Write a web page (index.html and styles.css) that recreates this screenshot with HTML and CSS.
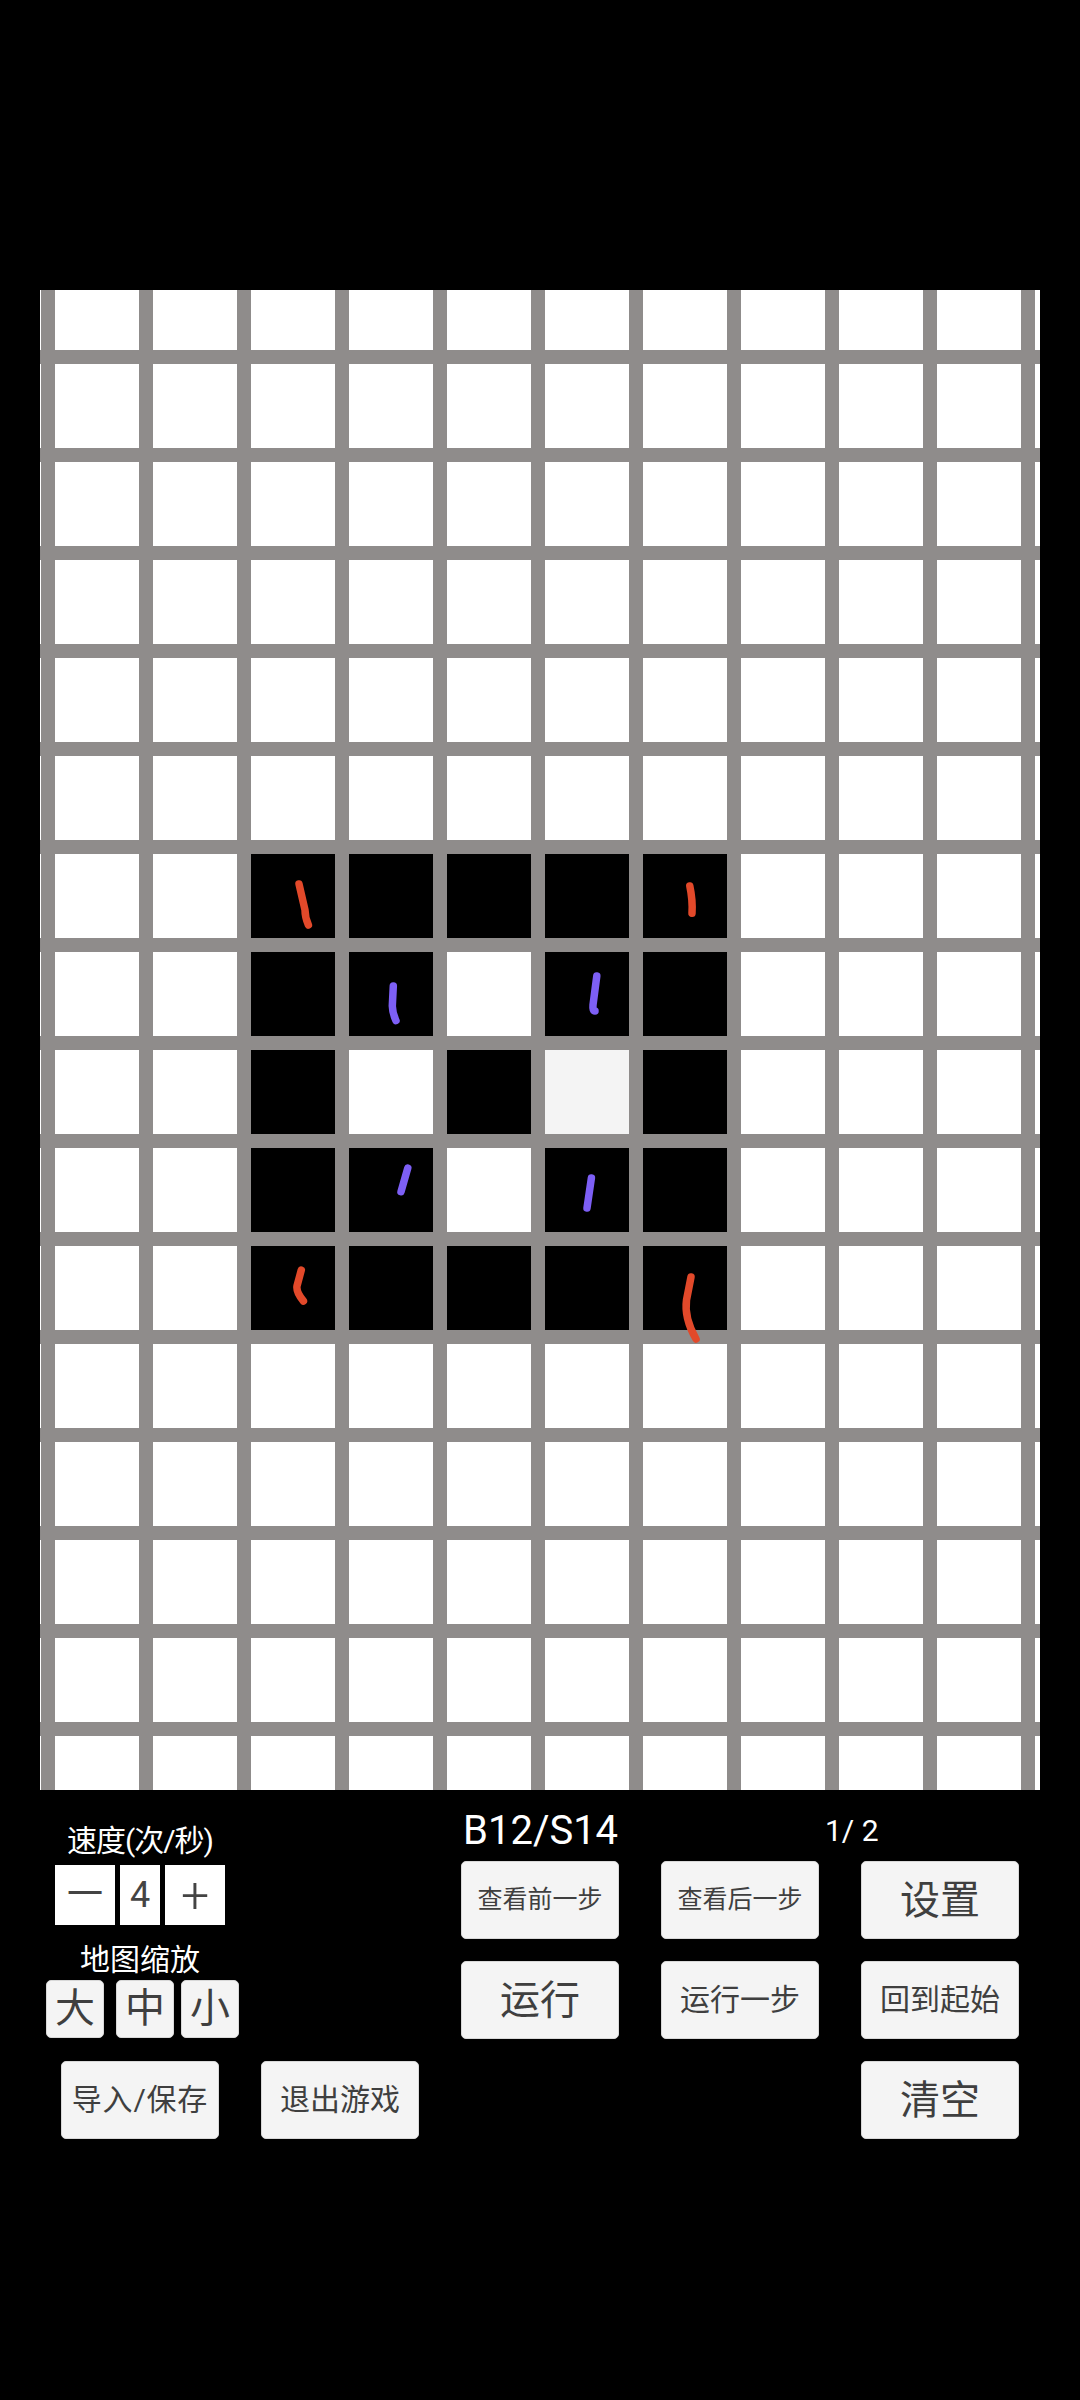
FILE: index.html
```html
<!DOCTYPE html>
<html lang="zh">
<head>
<meta charset="utf-8">
<title>B12/S14</title>
<link rel="stylesheet" href="styles.css">
</head>
<body>
<main class="page">
  <section class="board">
    <div class="cells">
      <div></div><div></div><div></div><div></div><div></div><div></div><div></div><div></div><div></div><div></div><div></div><div></div>
      <div></div><div></div><div></div><div></div><div></div><div></div><div></div><div></div><div></div><div></div><div></div><div></div>
      <div></div><div></div><div></div><div></div><div></div><div></div><div></div><div></div><div></div><div></div><div></div><div></div>
      <div></div><div></div><div></div><div></div><div></div><div></div><div></div><div></div><div></div><div></div><div></div><div></div>
      <div></div><div></div><div></div><div></div><div></div><div></div><div></div><div></div><div></div><div></div><div></div><div></div>
      <div></div><div></div><div></div><div></div><div></div><div></div><div></div><div></div><div></div><div></div><div></div><div></div>
      <div></div><div></div><div></div><div class="on"></div><div class="on"></div><div class="on"></div><div class="on"></div><div class="on"></div><div></div><div></div><div></div><div></div>
      <div></div><div></div><div></div><div class="on"></div><div class="on"></div><div></div><div class="on"></div><div class="on"></div><div></div><div></div><div></div><div></div>
      <div></div><div></div><div></div><div class="on"></div><div></div><div class="on"></div><div class="mark"></div><div class="on"></div><div></div><div></div><div></div><div></div>
      <div></div><div></div><div></div><div class="on"></div><div class="on"></div><div></div><div class="on"></div><div class="on"></div><div></div><div></div><div></div><div></div>
      <div></div><div></div><div></div><div class="on"></div><div class="on"></div><div class="on"></div><div class="on"></div><div class="on"></div><div></div><div></div><div></div><div></div>
      <div></div><div></div><div></div><div></div><div></div><div></div><div></div><div></div><div></div><div></div><div></div><div></div>
      <div></div><div></div><div></div><div></div><div></div><div></div><div></div><div></div><div></div><div></div><div></div><div></div>
      <div></div><div></div><div></div><div></div><div></div><div></div><div></div><div></div><div></div><div></div><div></div><div></div>
      <div></div><div></div><div></div><div></div><div></div><div></div><div></div><div></div><div></div><div></div><div></div><div></div>
      <div></div><div></div><div></div><div></div><div></div><div></div><div></div><div></div><div></div><div></div><div></div><div></div>
    </div>
    <svg class="strokes" viewBox="40 290 1000 1500" aria-hidden="true">
      <g class="red">
        <path d="M299 884 L305 910 Q305 917 308.4 925"/>
        <path d="M689.8 886 Q692.8 900 692 913.3"/>
        <path d="M301.3 1270 L297 1286 Q296 1292 303.4 1301"/>
        <path d="M691 1277 L686.5 1300 Q684 1318 696 1339"/>
      </g>
      <g class="violet">
        <path d="M393.3 986 L392.3 1006 Q392.5 1013 396 1020.7"/>
        <path d="M596.8 976 L593 1005 Q592.5 1011 595 1011"/>
        <path d="M407.8 1168 L401 1191.7"/>
        <path d="M591.4 1178 L587 1208"/>
      </g>
    </svg>
  </section>

  <section class="panel">
    <div class="left">
      <div class="label speed-label">速度(次/秒)</div>
      <div class="stepper">
        <div class="step wide">一</div>
        <div class="step">4</div>
        <div class="step wide plus">+</div>
      </div>
      <div class="label zoom-label">地图缩放</div>
      <div class="zoom">
        <button class="btn zoom-btn">大</button>
        <button class="btn zoom-btn">中</button>
        <button class="btn zoom-btn">小</button>
      </div>
    </div>
    <div class="rule">B12/S14</div>
    <div class="page-count">1/ 2</div>

    <button class="btn m pos-a">查看前一步</button>
    <button class="btn m pos-b">查看后一步</button>
    <button class="btn l pos-c">设置</button>

    <button class="btn l pos-a">运行</button>
    <button class="btn s pos-b">运行一步</button>
    <button class="btn s pos-c">回到起始</button>

    <button class="btn s spaced pos-d">导入/保存</button>
    <button class="btn s pos-e">退出游戏</button>
    <button class="btn l pos-c">清空</button>
  </section>
</main>
</body>
</html>
```

FILE: styles.css
```css
html, body {
  margin: 0;
  background: #000;
}

body {
  font-family: Roboto, "Noto Sans CJK SC", sans-serif;
  color: #fff;
}

.page {
  width: 1080px;
  height: 2400px;
  padding: 290px 40px 0;
  box-sizing: border-box;
}

.board {
  position: relative;
  width: 1000px;
  height: 1500px;
  overflow: hidden;
}

.cells {
  display: grid;
  grid-template-columns: 1px repeat(10, 84px) 5px;
  grid-template-rows: 60px repeat(14, 84px) 54px;
  gap: 14px;
  background: #8f8c8b;
}

.cells > div { background: #fff; }
.cells > .on { background: #000; }
.cells > .mark { background: #f4f4f4; }

.strokes {
  position: absolute;
  inset: 0;
  width: 1000px;
  height: 1500px;
}

.strokes path {
  fill: none;
  stroke-width: 7.5px;
  stroke-linecap: round;
  stroke-linejoin: round;
}

.red path { stroke: #e2492a; }
.violet path { stroke: #7d5ff5; }

.panel {
  display: grid;
  grid-template-columns: repeat(5, 158px);
  grid-template-rows: 49px 78px 78px 78px;
  column-gap: 42px;
  row-gap: 22px;
  margin-left: 21px;
}

.left {
  grid-column: 1;
  grid-row: 1 / span 3;
  display: flex;
  flex-direction: column;
  align-items: center;
}

.label {
  font-size: 30px;
  line-height: 40px;
  white-space: nowrap;
}

.speed-label {
  margin-top: 31px;
  letter-spacing: -1px;
}

.zoom-label { margin-top: 15px; }

.stepper {
  display: flex;
  gap: 5px;
  margin-top: 4px;
}

.step {
  width: 40px;
  height: 60px;
  background: #fff;
  color: #444;
  font-size: 36px;
  line-height: 60px;
  text-align: center;
}

.step.wide { width: 60px; }
.step.plus { font-size: 50px; font-weight: 300; }

.zoom {
  display: flex;
  gap: 7px;
  margin-left: 5px;
}

.btn {
  margin: 0;
  padding: 0 0 6px;
  box-sizing: border-box;
  border: 1px solid #d8d8d8;
  border-radius: 5px;
  background: #f4f4f4;
  color: #3f3f3f;
  font-family: inherit;
  white-space: nowrap;
}

.s { font-size: 30px; }
.m { font-size: 25px; }
.l { font-size: 40px; }
.spaced { letter-spacing: 0.8px; }

.zoom-btn {
  width: 58px;
  height: 58px;
  padding: 0;
  font-size: 40px;
  line-height: 50px;
}

.zoom-btn:first-child { margin-right: 5px; }

.rule {
  grid-column: 3;
  grid-row: 1;
  align-self: start;
  margin-top: 16px;
  padding-left: 2px;
  font-size: 40px;
  line-height: 50px;
  white-space: nowrap;
}

.page-count {
  grid-column: 4 / span 2;
  grid-row: 1;
  align-self: start;
  margin-top: 21px;
  padding-left: 164px;
  font-size: 30px;
  line-height: 40px;
  white-space: pre;
}

.pos-a { grid-column: 3; }
.pos-b { grid-column: 4; }
.pos-c { grid-column: 5; }
.pos-d { grid-column: 1; grid-row: 4; }
.pos-e { grid-column: 2; grid-row: 4; }
```
